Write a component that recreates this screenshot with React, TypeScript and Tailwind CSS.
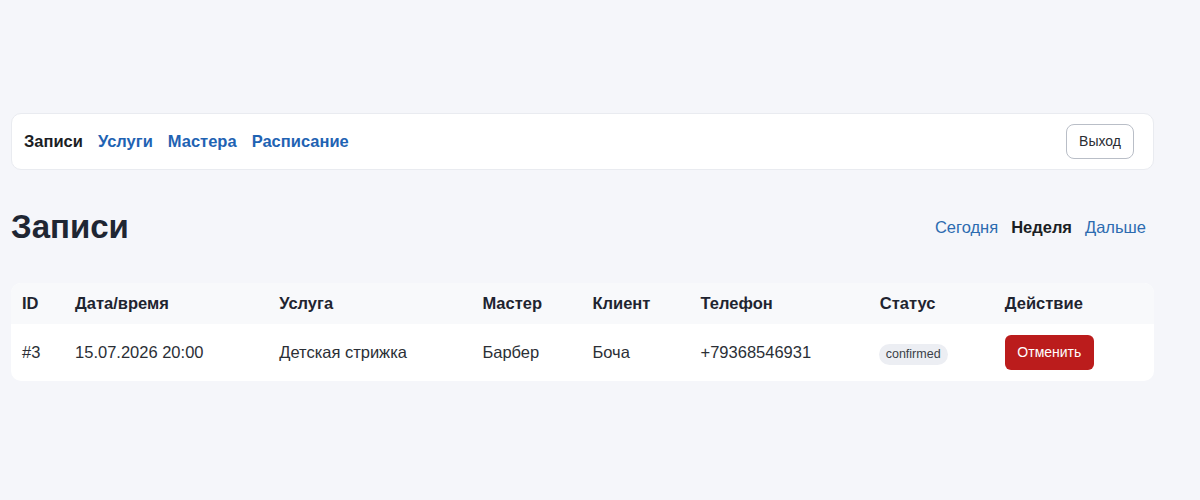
import React from 'react';

const cols = [
  { title: 'ID', w: 'w-[53px]' },
  { title: 'Дата/время', w: 'w-[204px]' },
  { title: 'Услуга', w: 'w-[203px]' },
  { title: 'Мастер', w: 'w-[110px]' },
  { title: 'Клиент', w: 'w-[108px]' },
  { title: 'Телефон', w: 'w-[179px]' },
  { title: 'Статус', w: 'w-[125px]' },
  { title: 'Действие', w: 'w-[160px]' },
];

const App: React.FC = () => {
  return (
    <div className="min-h-[500px] bg-[#f5f6fa] font-['Liberation_Sans',Arial,sans-serif] text-[#1f2430]">
      <div className="w-[1143px] ml-[11px] pt-[113px]">
        {/* Top nav */}
        <nav className="h-[57px] bg-white rounded-[10px] border border-[#e9ebf0] flex items-center justify-between pl-[12px] pr-[19px]">
          <div className="flex items-center gap-[15px] text-[16.5px] font-bold">
            <span className="text-[#1b1e24]">Записи</span>
            <a href="#" className="text-[#1f63b3]">Услуги</a>
            <a href="#" className="text-[#1f63b3]">Мастера</a>
            <a href="#" className="text-[#1f63b3]">Расписание</a>
          </div>
          <button className="h-[35px] w-[68px] rounded-[8px] border border-[#b9bec7] bg-white text-[14px] text-[#2a2d33]">
            Выход
          </button>
        </nav>

        {/* Heading */}
        <div className="mt-[37px] flex items-center justify-between pr-[8px]">
          <h1 className="text-[33px] leading-[40px] font-bold text-[#1f2633]">Записи</h1>
          <div className="flex items-center gap-[13px] text-[16.5px]">
            <a href="#" className="text-[#2c6bb0]">Сегодня</a>
            <span className="font-bold text-[#1b1e24]">Неделя</span>
            <a href="#" className="text-[#2c6bb0]">Дальше</a>
          </div>
        </div>

        {/* Table */}
        <div className="mt-[36px] bg-white rounded-[10px] overflow-hidden">
          <table className="w-full table-fixed border-collapse text-[16.5px]">
            <thead>
              <tr className="bg-[#f8f9fb] h-[41px]">
                {cols.map((c) => (
                  <th key={c.title} className={`${c.w} text-left font-bold pl-[11px] text-[#1f2430]`}>
                    {c.title}
                  </th>
                ))}
              </tr>
            </thead>
            <tbody>
              <tr className="h-[57px] text-[#2b2f36]">
                <td className="pl-[11px]">#3</td>
                <td className="pl-[11px]">15.07.2026 20:00</td>
                <td className="pl-[11px]">Детская стрижка</td>
                <td className="pl-[11px]">Барбер</td>
                <td className="pl-[11px]">Боча</td>
                <td className="pl-[11px]">+79368546931</td>
                <td className="pl-[10px]">
                  <span className="inline-block rounded-full bg-[#eceef3] px-[7px] py-[1px] text-[12.5px] text-[#3a3f48]">
                    confirmed
                  </span>
                </td>
                <td className="pl-[11px]">
                  <button className="h-[35px] w-[89px] rounded-[6px] bg-[#bb1c1c] text-white text-[14px]">
                    Отменить
                  </button>
                </td>
              </tr>
            </tbody>
          </table>
        </div>
      </div>
    </div>
  );
};

export default App;
